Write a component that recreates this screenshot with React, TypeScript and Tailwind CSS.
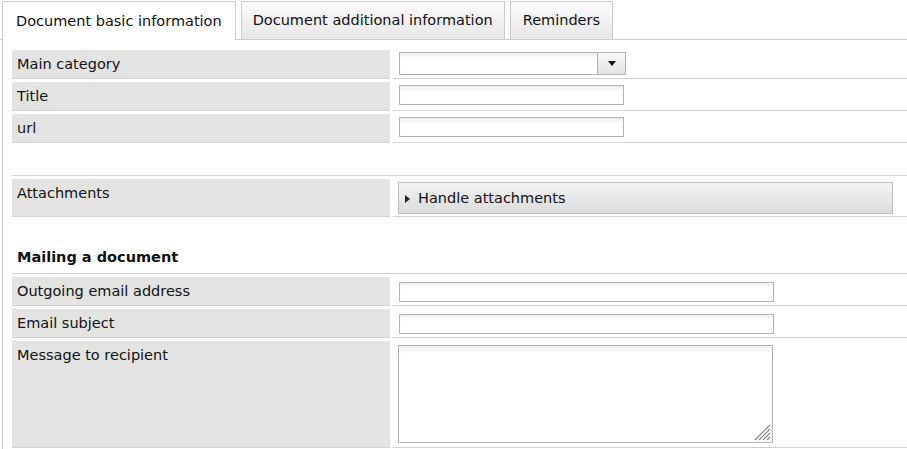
import React from "react";

const font = { fontFamily: '"DejaVu Sans", Verdana, sans-serif' };

function TextInput({ w }: { w: string }) {
  return (
    <div
      className={`${w} h-[20px] border border-[#b3b3b3] bg-white shadow-[inset_0_4px_5px_-2px_rgba(0,0,0,0.09)]`}
    />
  );
}

function Label({ children, h }: { children: React.ReactNode; h: string }) {
  return (
    <div className={`${h} bg-[#e3e3e2] border-b border-[#d2d2d2] px-[5px] pt-[5px] text-[14.5px] leading-[18px] text-[#111]`}>
      {children}
    </div>
  );
}

function Value({ children, h, pt }: { children?: React.ReactNode; h: string; pt: string }) {
  return (
    <div className={`${h} border-b border-[#d2d2d2] pl-[6px] ${pt}`}>{children}</div>
  );
}

export default function App() {
  return (
    <div className="w-[907px] h-[449px] bg-white overflow-hidden text-[#111]" style={font}>
      {/* tabs */}
      <div className="flex items-end gap-[5px] pl-[2px] pt-[1px] border-b border-[#cccccc] h-[40px]">
        <div className="h-[39px] -mb-px bg-white border border-b-0 border-[#cccccc] px-[13px] pt-[10px] text-[14.5px] leading-[18px] whitespace-nowrap">
          Document basic information
        </div>
        <div className="h-[38px] bg-gradient-to-b from-[#fbfbfb] to-[#e7e7e7] border border-b-0 border-[#cccccc] px-[11px] pt-[9px] text-[14.5px] leading-[18px] whitespace-nowrap">
          Document additional information
        </div>
        <div className="h-[38px] bg-gradient-to-b from-[#fbfbfb] to-[#e7e7e7] border border-b-0 border-[#cccccc] px-[12px] pt-[9px] text-[14.5px] leading-[18px] whitespace-nowrap">
          Reminders
        </div>
      </div>

      {/* content */}
      <div className="ml-[2px] border-l border-[#cccccc] pl-[9px] pt-[10px] h-[409px]">
        <div className="grid grid-cols-[378px_1fr] gap-x-[3px] gap-y-[3px]">
          <Label h="h-[29px]">Main category</Label>
          <Value h="h-[29px]" pt="pt-[2px]">
            <div className="flex w-[227px] h-[23px] border border-[#b3b3b3] bg-white shadow-[inset_0_4px_5px_-2px_rgba(0,0,0,0.09)]">
              <div className="flex-1" />
              <div className="w-[28px] h-full border-l border-[#b3b3b3] bg-gradient-to-b from-[#fafafa] to-[#e2e2e2] flex items-center justify-center">
                <svg width="8" height="5" viewBox="0 0 8 5">
                  <path d="M0 0 H8 L4 5 Z" fill="#111" />
                </svg>
              </div>
            </div>
          </Value>

          <Label h="h-[29px]">Title</Label>
          <Value h="h-[29px]" pt="pt-[3px]">
            <TextInput w="w-[225px]" />
          </Value>

          <Label h="h-[29px]">url</Label>
          <Value h="h-[29px]" pt="pt-[3px]">
            <TextInput w="w-[225px]" />
          </Value>

          <div className="col-span-2 h-[30px] border-b border-[#d2d2d2]" />

          <Label h="h-[38px]">Attachments</Label>
          <div className="h-[38px] border-b border-[#d2d2d2] pl-[5px] pr-[14px] pt-[3px]">
            <div className="h-[32px] border border-[#bdbdbd] bg-gradient-to-b from-[#f3f3f3] to-[#dcdcdc] flex items-center pl-[6px] pt-[1px] text-[14.5px]">
              <svg width="5" height="8" viewBox="0 0 5 8" className="mr-[8px]">
                <path d="M0 0 L5 4 L0 8 Z" fill="#222" />
              </svg>
              Handle attachments
            </div>
          </div>

          <div className="col-span-2 h-[54px] border-b border-[#d2d2d2] flex items-end pl-[5px] pb-[7px] text-[14.5px] leading-[18px] font-bold">
            Mailing a document
          </div>

          <Label h="h-[29px]">Outgoing email address</Label>
          <Value h="h-[29px]" pt="pt-[5px]">
            <TextInput w="w-[375px]" />
          </Value>

          <Label h="h-[29px]">Email subject</Label>
          <Value h="h-[29px]" pt="pt-[5px]">
            <TextInput w="w-[375px]" />
          </Value>

          <Label h="h-[107px]">Message to recipient</Label>
          <div className="h-[107px] border-b border-[#d2d2d2] pl-[5px] pt-[4px]">
            <div className="relative w-[375px] h-[98px] border border-[#b3b3b3] bg-white shadow-[inset_0_5px_6px_-3px_rgba(0,0,0,0.09)]">
              <svg width="18" height="18" viewBox="0 0 18 18" className="absolute right-[1px] bottom-[1px]">
                <path d="M17 2 L2 17 M17 6 L6 17 M17 10 L10 17 M17 14 L14 17" stroke="#808080" strokeWidth="1.2" />
              </svg>
            </div>
          </div>
        </div>
      </div>
    </div>
  );
}
